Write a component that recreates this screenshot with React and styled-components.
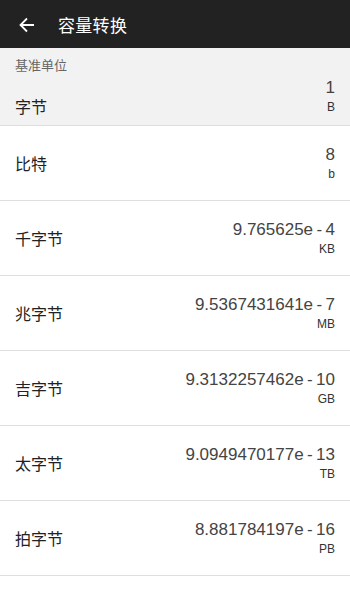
import React from 'react';
import styled, { createGlobalStyle } from 'styled-components';

const GlobalStyle = createGlobalStyle`
  html, body {
    margin: 0;
    padding: 0;
    background: #ffffff;
  }
  body {
    font-family: "Liberation Sans", "Noto Sans CJK SC", sans-serif;
  }
`;

const Page = styled.div`
  width: 350px;
  height: 600px;
  overflow: hidden;
  background: #ffffff;
`;

const Header = styled.header`
  height: 48px;
  background: #222222;
  display: flex;
  align-items: center;
  padding: 0 0 0 19px;
  box-sizing: border-box;
`;

const BackButton = styled.button`
  width: 16px;
  height: 16px;
  padding: 0;
  margin: 2px 23px 0 0;
  border: none;
  background: none;
  display: flex;
  align-items: center;
  justify-content: center;
`;

const Title = styled.h1`
  margin: 0;
  font-size: 17px;
  font-weight: 400;
  color: #ffffff;
  font-family: "Noto Sans CJK SC", sans-serif;
  letter-spacing: 0.3px;
`;

const BaseSection = styled.section`
  background: #f2f2f2;
  padding: 8px 15px 9px;
  border-bottom: 1px solid #dedede;
`;

const SectionTitle = styled.div`
  font-size: 13px;
  line-height: 18px;
  color: #666666;
  font-family: "Noto Sans CJK SC", sans-serif;
  margin-bottom: 3px;
`;

const Row = styled.div`
  display: flex;
  justify-content: space-between;
  align-items: ${(p) => (p.$base ? 'flex-end' : 'center')};
  height: ${(p) => (p.$base ? 'auto' : '74px')};
  padding: ${(p) => (p.$base ? '0' : '0 15px')};
  border-bottom: ${(p) => (p.$base ? 'none' : '1px solid #dedede')};
`;

const Label = styled.div`
  font-size: 16px;
  line-height: 22px;
  color: #222222;
  font-family: "Noto Sans CJK SC", sans-serif;
  margin-bottom: ${(p) => (p.$base ? '-1px' : '0')};
`;

const ValueBlock = styled.div`
  display: flex;
  flex-direction: column;
  align-items: flex-end;
`;

const Value = styled.div`
  font-size: 17px;
  line-height: 22px;
  color: #444444;
  font-family: "Liberation Sans", sans-serif;
`;

const Unit = styled.div`
  font-size: 12px;
  line-height: 17px;
  color: #333333;
  font-family: "Liberation Sans", sans-serif;
`;

const units = [
  { name: '比特', value: '8', unit: 'b' },
  { name: '千字节', value: '9.765625e\u2009-\u20094', unit: 'KB' },
  { name: '兆字节', value: '9.5367431641e\u2009-\u20097', unit: 'MB' },
  { name: '吉字节', value: '9.3132257462e\u2009-\u200910', unit: 'GB' },
  { name: '太字节', value: '9.0949470177e\u2009-\u200913', unit: 'TB' },
  { name: '拍字节', value: '8.881784197e\u2009-\u200916', unit: 'PB' },
];

const App = () => {
  return (
    <Page>
      <GlobalStyle />
      <Header>
        <BackButton>
          <svg width="16" height="16" viewBox="0 0 16 16" fill="none">
            <path d="M15 8H2M8 1.5L1.5 8L8 14.5" stroke="#ffffff" strokeWidth="1.8" />
          </svg>
        </BackButton>
        <Title>容量转换</Title>
      </Header>
      <BaseSection>
        <SectionTitle>基准单位</SectionTitle>
        <Row $base>
          <Label $base>字节</Label>
          <ValueBlock>
            <Value>1</Value>
            <Unit>B</Unit>
          </ValueBlock>
        </Row>
      </BaseSection>
      {units.map((u) => (
        <Row key={u.unit}>
          <Label>{u.name}</Label>
          <ValueBlock>
            <Value>{u.value}</Value>
            <Unit>{u.unit}</Unit>
          </ValueBlock>
        </Row>
      ))}
    </Page>
  );
};

export default App;
